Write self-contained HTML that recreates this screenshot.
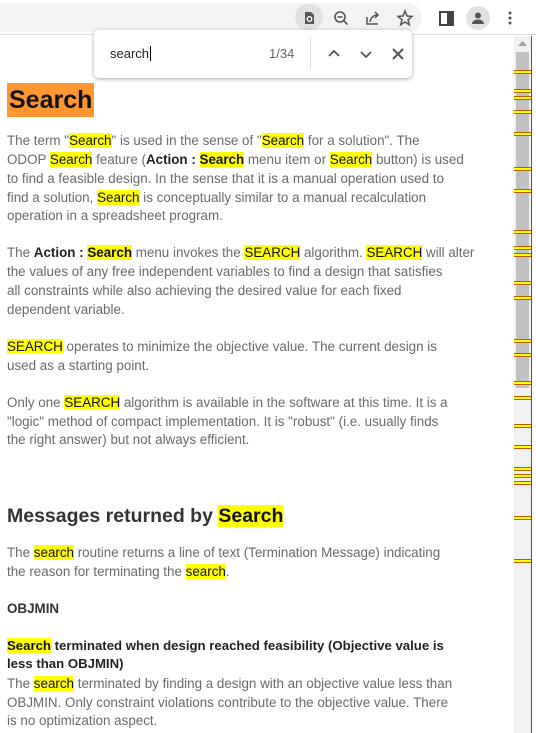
<!DOCTYPE html>
<html><head><meta charset="utf-8"><style>
*{margin:0;padding:0;box-sizing:border-box}
body{width:536px;height:733px;overflow:hidden;background:#fff;font-family:"Liberation Sans",sans-serif;position:relative}
.top{position:absolute;left:0;top:0;width:536px;height:35px;background:#fff;border-bottom:1px solid #dadce0}
.omni{position:absolute;left:-20px;top:3px;width:442px;height:29px;background:#f1f3f4;border-radius:15px}
.ic{position:absolute;top:6px;width:24px;height:24px}
.find{position:absolute;left:94px;top:30px;width:318px;height:48px;background:#fff;border-radius:5px;box-shadow:0 1px 4px rgba(0,0,0,.35);z-index:5}
.l{position:absolute;left:7px;white-space:nowrap;font-size:13.4px;color:#6a6a6a;line-height:18px}
.h{background:#ffff00;color:#111}
b{color:#222}
.sb{position:absolute;left:514px;top:36px;width:17px;height:697px;background:#f1f1f1}
.thumb{position:absolute;left:516px;top:52px;width:13px;height:336px;background:#c1c1c1}
.edge{position:absolute;left:531px;top:36px;width:1px;height:697px;background:#555}
.m{position:absolute;left:514px;width:17px;height:4px;background:#ffff00;border-top:1px solid #b06000;border-bottom:1px solid #b06000}
</style></head><body>
<div class="top"><div class="omni"></div>
<div style="position:absolute;left:295px;top:4px;width:28px;height:26px;border-radius:13px;background:#dfe1e5"></div>
<svg class="ic" style="left:297px" viewBox="0 0 24 24"><path d="M8 6h6l3 3v9H8z" fill="#555"/><circle cx="12.5" cy="13" r="2.3" fill="none" stroke="#fff" stroke-width="1.3"/></svg>
<svg class="ic" style="left:329px" viewBox="0 0 24 24"><circle cx="11" cy="11" r="5" fill="none" stroke="#555" stroke-width="1.6"/><path d="M8.5 11h5M14.5 14.5l4 4" stroke="#555" stroke-width="1.6"/></svg>
<svg class="ic" style="left:361px" viewBox="0 0 24 24"><path d="M6 11v7h11" fill="none" stroke="#555" stroke-width="1.5"/><path d="M9 16c1-5 4-7 8-7M14 6l3 3-3 3" fill="none" stroke="#555" stroke-width="1.5"/></svg>
<svg class="ic" style="left:393px" viewBox="0 0 24 24"><path d="M12 5l2 5 5 .4-4 3.4 1.3 5L12 16l-4.3 2.8 1.3-5-4-3.4 5-.4z" fill="none" stroke="#555" stroke-width="1.5"/></svg>
<svg class="ic" style="left:434px" viewBox="0 0 24 24"><rect x="6" y="6" width="13" height="13" fill="none" stroke="#444" stroke-width="2"/><rect x="13" y="6" width="6" height="13" fill="#444"/></svg>
<div style="position:absolute;left:466px;top:6px;width:24px;height:24px;border-radius:12px;background:#dfe1e5"></div>
<svg class="ic" style="left:466px" viewBox="0 0 24 24"><circle cx="12" cy="9.5" r="3" fill="#555"/><path d="M6 18c0-3 3-4.5 6-4.5s6 1.5 6 4.5z" fill="#555"/></svg>
<svg class="ic" style="left:498px" viewBox="0 0 24 24"><circle cx="12" cy="7" r="1.5" fill="#555"/><circle cx="12" cy="12" r="1.5" fill="#555"/><circle cx="12" cy="17" r="1.5" fill="#555"/></svg>
</div>
<div class="find">
<div style="position:absolute;left:16px;top:16px;font-size:13px;color:#222">search<span style="border-left:1px solid #000;margin-left:1px"></span></div>
<div style="position:absolute;left:175px;top:16px;font-size:13px;color:#666">1/34</div>
<div style="position:absolute;left:216px;top:8px;width:1px;height:32px;background:#ddd"></div>
<svg style="position:absolute;left:232px;top:16px" width="16" height="16" viewBox="0 0 16 16"><path d="M3 10l5-5 5 5" fill="none" stroke="#555" stroke-width="1.8"/></svg>
<svg style="position:absolute;left:264px;top:16px" width="16" height="16" viewBox="0 0 16 16"><path d="M3 6l5 5 5-5" fill="none" stroke="#555" stroke-width="1.8"/></svg>
<svg style="position:absolute;left:296px;top:16px" width="16" height="16" viewBox="0 0 16 16"><path d="M3 3l10 10M13 3L3 13" stroke="#555" stroke-width="2"/></svg>
</div>
<div style="position:absolute;left:7px;top:83px;height:34px;padding:0 2px;background:#ff9632;font-size:25px;font-weight:bold;color:#111;line-height:34px">Search</div>
<div class="l" style="top:132px">The term "<span class="h">Search</span>" is used in the sense of "<span class="h">Search</span> for a solution". The</div>
<div class="l" style="top:151px">ODOP <span class="h">Search</span> feature (<b>Action : <span class="h">Search</span></b> menu item or <span class="h">Search</span> button) is used</div>
<div class="l" style="top:170px">to find a feasible design. In the sense that it is a manual operation used to</div>
<div class="l" style="top:189px">find a solution, <span class="h">Search</span> is conceptually similar to a manual recalculation</div>
<div class="l" style="top:207px">operation in a spreadsheet program.</div>
<div class="l" style="top:244px">The <b>Action : <span class="h">Search</span></b> menu invokes the <span class="h">SEARCH</span> algorithm. <span class="h">SEARCH</span> will alter</div>
<div class="l" style="top:263px">the values of any free independent variables to find a design that satisfies</div>
<div class="l" style="top:282px">all constraints while also achieving the desired value for each fixed</div>
<div class="l" style="top:301px">dependent variable.</div>
<div class="l" style="top:338px"><span class="h">SEARCH</span> operates to minimize the objective value. The current design is</div>
<div class="l" style="top:357px">used as a starting point.</div>
<div class="l" style="top:394px">Only one <span class="h">SEARCH</span> algorithm is available in the software at this time. It is a</div>
<div class="l" style="top:413px">"logic" method of compact implementation. It is "robust" (i.e. usually finds</div>
<div class="l" style="top:431px">the right answer) but not always efficient.</div>
<div class="l" style="top:503px;font-size:19.5px;font-weight:bold;color:#333;line-height:27px">Messages returned by <span class="h">Search</span></div>
<div class="l" style="top:544px">The <span class="h">search</span> routine returns a line of text (Termination Message) indicating</div>
<div class="l" style="top:563px">the reason for terminating the <span class="h">search</span>.</div>
<div class="l" style="top:600px"><b style="color:#333">OBJMIN</b></div>
<div class="l" style="top:637px;font-size:13.2px"><b><span class="h">Search</span> terminated when design reached feasibility (Objective value is</b></div>
<div class="l" style="top:655px;font-size:13.2px"><b>less than OBJMIN)</b></div>
<div class="l" style="top:675px">The <span class="h">search</span> terminated by finding a design with an objective value less than</div>
<div class="l" style="top:694px">OBJMIN. Only constraint violations contribute to the objective value. There</div>
<div class="l" style="top:712px">is no optimization aspect.</div>
<div class="sb"></div>
<svg style="position:absolute;left:517px;top:40px" width="11" height="8"><path d="M1 6h9L5.5 1z" fill="#a3a3a3"/></svg>
<div class="thumb"></div>
<div class="edge"></div>
<div class="m" style="top:70px"></div><div class="m" style="top:89px"></div><div class="m" style="top:96px"></div><div class="m" style="top:110px"></div><div class="m" style="top:132px"></div><div class="m" style="top:167px"></div><div class="m" style="top:189px"></div><div class="m" style="top:230px"></div><div class="m" style="top:246px"></div><div class="m" style="top:253px"></div><div class="m" style="top:281px"></div><div class="m" style="top:296px"></div><div class="m" style="top:339px"></div><div class="m" style="top:353px"></div><div class="m" style="top:381px"></div><div class="m" style="top:396px"></div><div class="m" style="top:424px"></div><div class="m" style="top:445px"></div><div class="m" style="top:467px"></div><div class="m" style="top:474px"></div><div class="m" style="top:481px"></div><div class="m" style="top:516px"></div><div class="m" style="top:559px"></div>
</body></html>
